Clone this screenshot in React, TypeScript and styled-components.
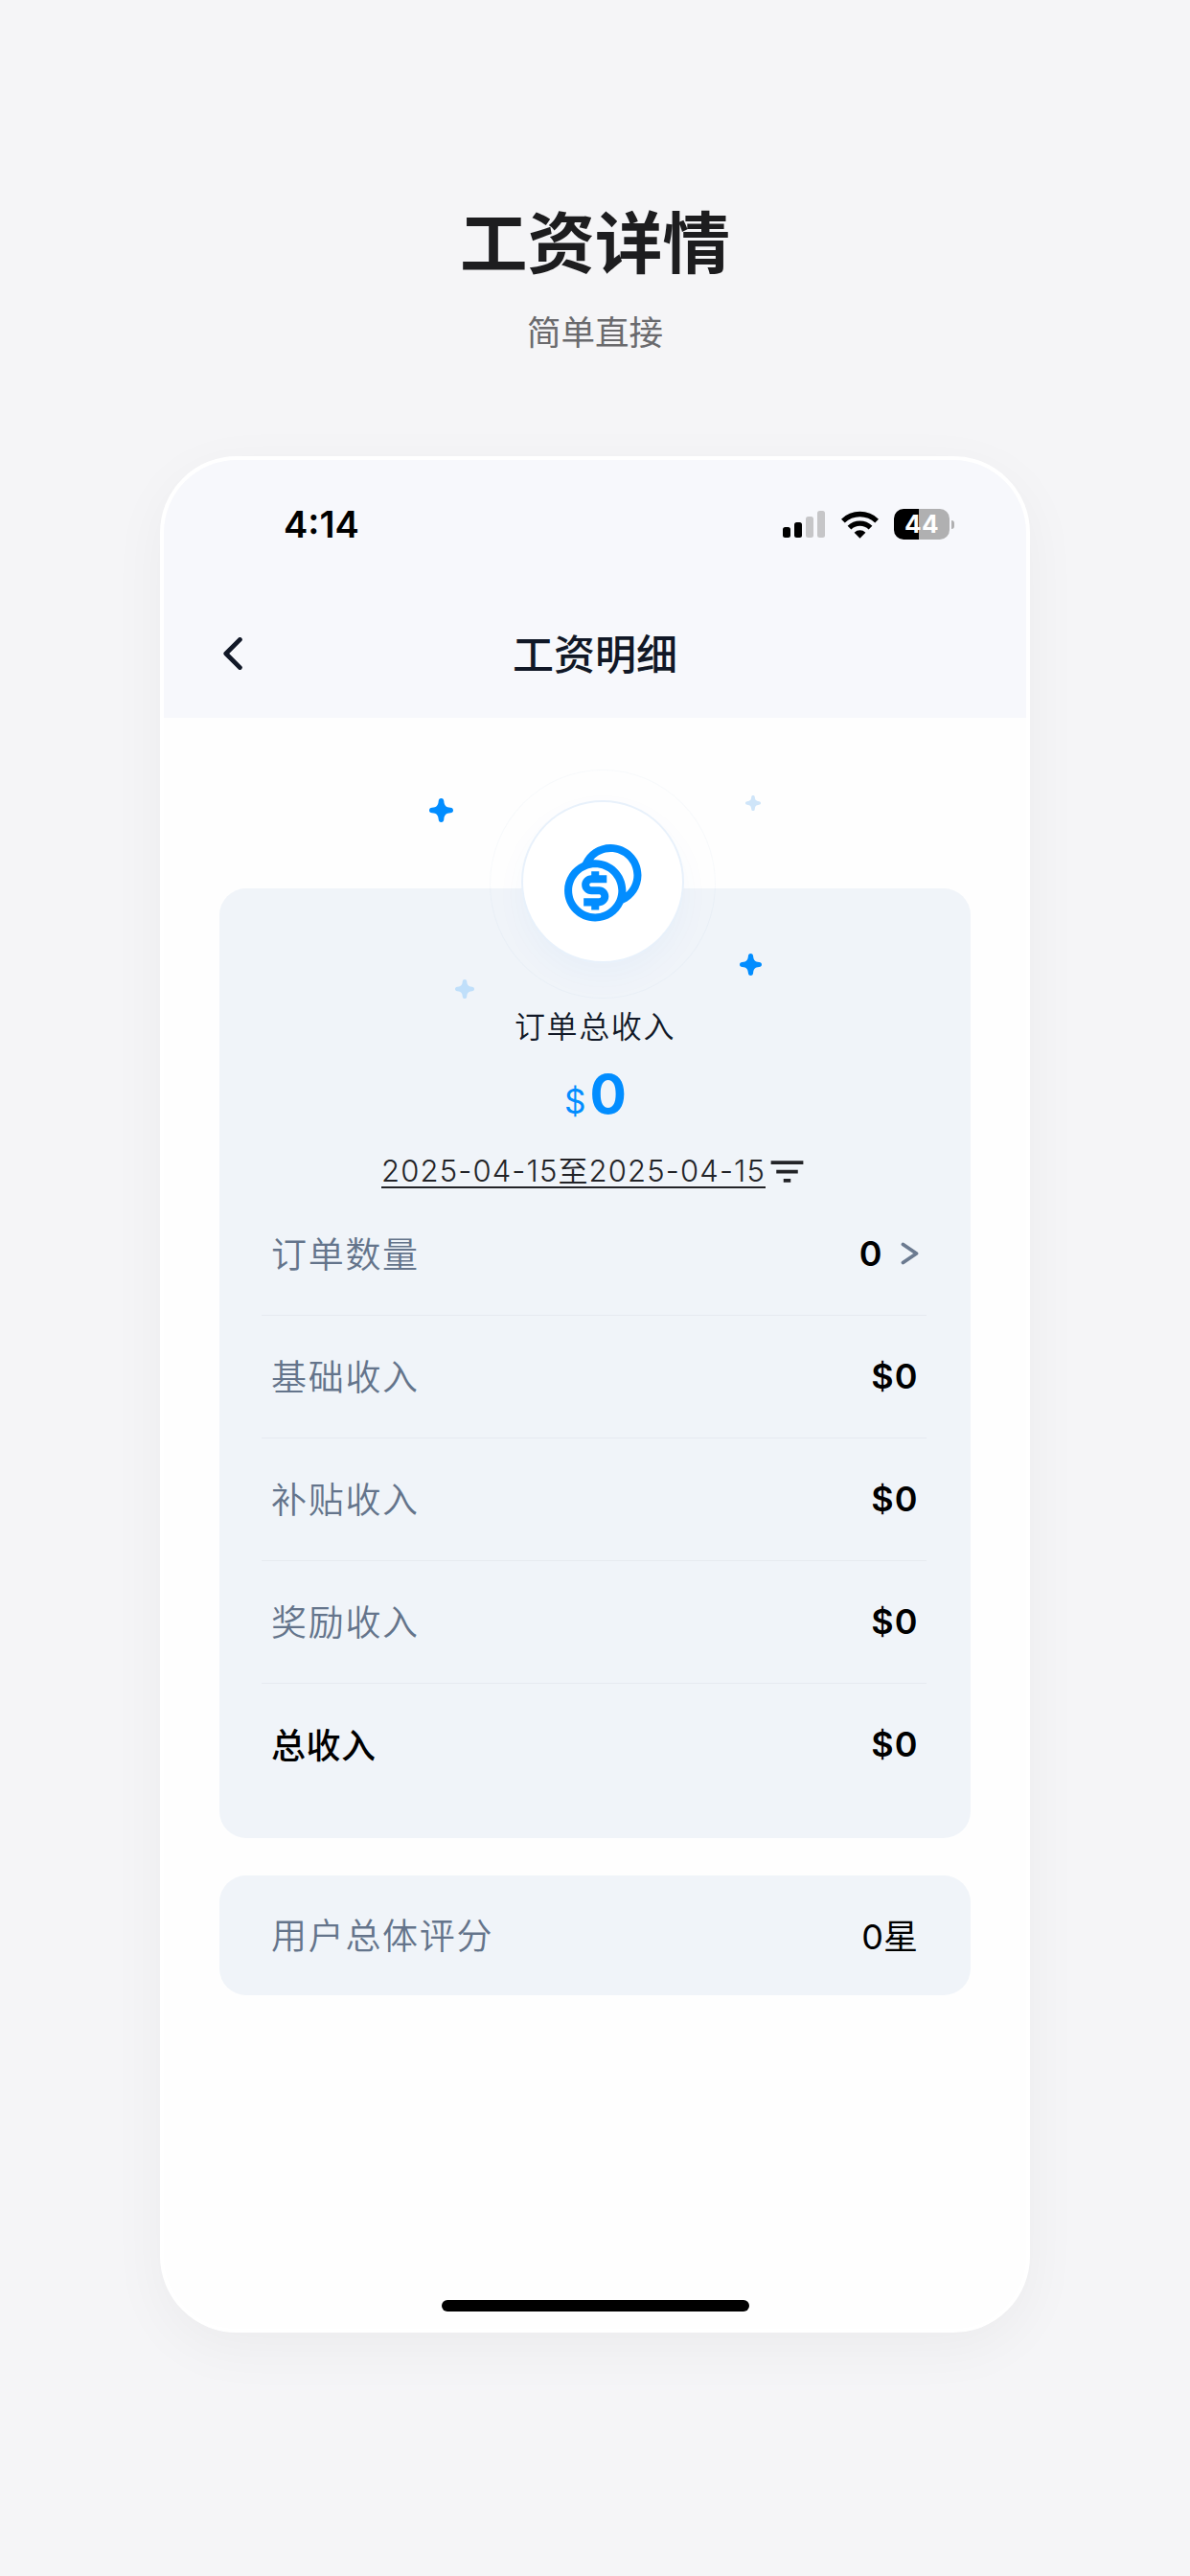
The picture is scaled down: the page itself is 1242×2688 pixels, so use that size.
import React from 'react';
import styled, { createGlobalStyle, ThemeProvider } from 'styled-components';
import { MdFilterList } from 'react-icons/md';
import { RiCoinsLine } from 'react-icons/ri';

const theme = {
  page: '#f5f5f7',
  header: '#f7f8fc',
  card: '#f0f4f9',
  primary: '#028dff',
  ink: '#111827',
  gray: '#64748b',
  line: '#e6eaf0',
};

interface IIncomeRow {
  label: string;
  value: string;
  link?: boolean;
  total?: boolean;
}

interface ISparkle {
  x: number;
  y: number;
  size: number;
  color: string;
}

const incomeRows: IIncomeRow[] = [
  { label: '订单数量', value: '0', link: true },
  { label: '基础收入', value: '$0' },
  { label: '补贴收入', value: '$0' },
  { label: '奖励收入', value: '$0' },
  { label: '总收入', value: '$0', total: true },
];

// centers, relative to the card's top left corner
const sparkles: ISparkle[] = [
  { x: 231.5, y: -81.5, size: 25, color: '#028dff' },
  { x: 556.5, y: -89.5, size: 16, color: '#cfe5f9' },
  { x: 554, y: 79, size: 23, color: '#028dff' },
  { x: 255.5, y: 105, size: 20, color: '#c0dffa' },
];

const SignalIcon = () => (
  <svg width="45" height="28" viewBox="0 0 45 28">
    <rect x="0" y="17" width="8" height="11" rx="2.5" fill="#000" />
    <rect x="12" y="12" width="8" height="16" rx="2.5" fill="#000" />
    <rect x="24" y="6" width="8" height="22" rx="2.5" fill="#c6c6c8" />
    <rect x="36" y="0" width="8" height="28" rx="2.5" fill="#c6c6c8" />
  </svg>
);

const WifiIcon = () => (
  <svg width="39" height="29" viewBox="0 0 39 29">
    <g fill="none" stroke="#000" strokeWidth="5.4">
      <path d="M1.9 10.6 A25.4 25.4 0 0 1 37.1 10.6" />
      <path d="M8.5 17.6 A15.7 15.7 0 0 1 30.5 17.6" />
    </g>
    <path d="M13.6 22.7 A8.6 8.6 0 0 1 25.4 22.7 L19.5 28.8 Z" fill="#000" />
  </svg>
);

const Sparkle = ({ item }: { item: ISparkle }) => (
  <SparkleBox $x={item.x} $y={item.y} $size={item.size}>
    <svg width="100%" height="100%" viewBox="0 0 24 24">
      <path
        fill={item.color}
        d="M12 0C13.7 0 14.5 1 14.7 2.8C15.2 7.4 16.6 8.8 21.2 9.3C23 9.5 24 10.3 24 12C24 13.7 23 14.5 21.2 14.7C16.6 15.2 15.2 16.6 14.7 21.2C14.5 23 13.7 24 12 24C10.3 24 9.5 23 9.3 21.2C8.8 16.6 7.4 15.2 2.8 14.7C1 14.5 0 13.7 0 12C0 10.3 1 9.5 2.8 9.3C7.4 8.8 8.8 7.4 9.3 2.8C9.5 1 10.3 0 12 0Z"
      />
    </svg>
  </SparkleBox>
);

const StatusBar = () => (
  <StatusWrapper>
    <Time>4:14</Time>
    <StatusIcons>
      <SignalIcon />
      <WifiIcon />
      <Battery>
        <BatteryBody>44</BatteryBody>
        <BatteryCap />
      </Battery>
    </StatusIcons>
  </StatusWrapper>
);

const IncomeRow = ({ row }: { row: IIncomeRow }) => (
  <Row>
    <Label $total={row.total}>{row.label}</Label>
    <ValueBox>
      <Value>{row.value}</Value>
      {row.link && (
        <svg width="19" height="24" viewBox="0 0 19 24">
          <path
            d="M2.5 2.5 L16.5 12 L2.5 21.5"
            fill="none"
            stroke="#6b7a90"
            strokeWidth="3.8"
            strokeLinecap="round"
            strokeLinejoin="round"
          />
        </svg>
      )}
    </ValueBox>
  </Row>
);

const App = () => {
  return (
    <ThemeProvider theme={theme}>
      <GlobalStyle />
      <Page>
        <PageTitle>工资详情</PageTitle>
        <PageSubtitle>简单直接</PageSubtitle>
        <Phone>
          <Header>
            <StatusBar />
            <NavBar>
              <BackButton>
                <svg width="20" height="34" viewBox="0 0 20 34">
                  <path
                    d="M17.4 2.4 L2.8 17 L17.4 31.6"
                    fill="none"
                    stroke="#111827"
                    strokeWidth="4.8"
                    strokeLinecap="round"
                    strokeLinejoin="round"
                  />
                </svg>
              </BackButton>
              <NavTitle>工资明细</NavTitle>
            </NavBar>
          </Header>
          <Body>
            <SummaryCard>
              <Halo>
                <Badge>
                  <RiCoinsLine size={96.5} />
                </Badge>
              </Halo>
              {sparkles.map((item) => (
                <Sparkle key={`${item.x}-${item.y}`} item={item} />
              ))}
              <SummaryLabel>订单总收入</SummaryLabel>
              <Amount>
                <Currency>$</Currency>0
              </Amount>
              <DateFilter>
                <DateRange>2025-04-15至2025-04-15</DateRange>
                <MdFilterList size={45} />
              </DateFilter>
              <Rows>
                {incomeRows.map((row) => (
                  <IncomeRow key={row.label} row={row} />
                ))}
              </Rows>
            </SummaryCard>
            <RatingCard>
              <Label>用户总体评分</Label>
              <Rating>0星</Rating>
            </RatingCard>
          </Body>
          <HomeIndicator />
        </Phone>
      </Page>
    </ThemeProvider>
  );
};

const GlobalStyle = createGlobalStyle`
  * {
    box-sizing: border-box;
  }

  body {
    margin: 0;
    background: #f5f5f7;
    font-family: Inter, 'Noto Sans CJK SC', sans-serif;
  }

  svg {
    display: block;
    flex-shrink: 0;
  }
`;

const Page = styled.div`
  display: flex;
  flex-direction: column;
  align-items: center;
  width: 1242px;
  height: 2688px;
  padding-top: 199px;
  overflow: hidden;
  background: ${(props) => props.theme.page};
`;

const PageTitle = styled.h1`
  margin: 0;
  font-family: 'Noto Sans CJK SC', sans-serif;
  font-size: 70.5px;
  font-weight: 700;
  line-height: 100px;
  color: #1d1d1f;
`;

const PageSubtitle = styled.div`
  margin-top: 21px;
  font-family: 'Noto Sans CJK SC', sans-serif;
  font-size: 35.5px;
  line-height: 50px;
  color: #6a6a6d;
`;

const Phone = styled.div`
  display: flex;
  flex-direction: column;
  width: 908px;
  height: 1958px;
  margin-top: 106px;
  border: 4px solid #fff;
  border-radius: 80px;
  overflow: hidden;
  background: #fefefe;
  box-shadow: 0 16px 60px rgba(20, 10, 20, 0.045);
`;

const Header = styled.div`
  height: 269px;
  background: ${(props) => props.theme.header};
`;

const StatusWrapper = styled.div`
  display: flex;
  justify-content: space-between;
  align-items: center;
  height: 134px;
  padding: 0 75px 0 125px;
`;

const Time = styled.div`
  font-size: 38px;
  font-weight: 600;
  color: #000;
`;

const StatusIcons = styled.div`
  display: flex;
  align-items: center;
  gap: 16px;
`;

const Battery = styled.div`
  display: flex;
  align-items: center;
  gap: 2px;
`;

const BatteryBody = styled.div`
  width: 58px;
  height: 32px;
  border-radius: 10px;
  background: linear-gradient(90deg, #000 44.5%, #b0b0b1 44.5%);
  font-size: 26px;
  font-weight: 650;
  line-height: 32px;
  letter-spacing: 0.4px;
  text-align: center;
  color: #fff;
`;

const BatteryCap = styled.div`
  width: 3px;
  height: 9px;
  border-radius: 0 4px 4px 0;
  background: #b0b0b1;
`;

const NavBar = styled.div`
  display: grid;
  grid-template-columns: 100px 1fr 100px;
  align-items: center;
  height: 135px;
`;

const BackButton = styled.div`
  padding-left: 62px;
`;

const NavTitle = styled.div`
  padding-bottom: 3px;
  font-family: 'Noto Sans CJK SC', sans-serif;
  font-size: 43px;
  font-weight: 500;
  line-height: 62px;
  text-align: center;
  color: ${(props) => props.theme.ink};
`;

const Body = styled.div`
  display: flex;
  flex-direction: column;
  flex: 1;
  gap: 39px;
  padding: 178px 58px 0;
`;

const SummaryCard = styled.div`
  position: relative;
  display: flex;
  flex-direction: column;
  align-items: center;
  height: 991px;
  padding-top: 118px;
  border-radius: 28px;
  background: ${(props) => props.theme.card};
`;

const Halo = styled.div`
  position: absolute;
  top: -124px;
  left: 282px;
  display: flex;
  justify-content: center;
  padding-top: 31px;
  width: 236px;
  height: 239px;
  border: 1px solid rgba(120, 150, 190, 0.05);
  border-radius: 50%;
`;

const Badge = styled.div`
  display: flex;
  justify-content: center;
  align-items: center;
  width: 170px;
  height: 170px;
  padding-top: 2px;
  border: 2px solid #e8f1fb;
  border-radius: 50%;
  background: #fff;
  box-shadow: 0 14px 34px rgba(2, 100, 220, 0.035);
  color: ${(props) => props.theme.primary};
`;

const SparkleBox = styled.div<{ $x: number; $y: number; $size: number }>`
  position: absolute;
  top: ${(props) => props.$y - props.$size / 2}px;
  left: ${(props) => props.$x - props.$size / 2}px;
  width: ${(props) => props.$size}px;
  height: ${(props) => props.$size}px;
`;

const SummaryLabel = styled.div`
  font-family: 'Noto Sans CJK SC', sans-serif;
  font-size: 32px;
  font-weight: 350;
  line-height: 48px;
  letter-spacing: 1.6px;
  color: ${(props) => props.theme.ink};
`;

const Amount = styled.div`
  display: flex;
  align-items: baseline;
  gap: 5px;
  height: 70px;
  margin-top: 14px;
  font-size: 57px;
  font-weight: 650;
  line-height: 70px;
  letter-spacing: -1px;
  color: ${(props) => props.theme.primary};
`;

const Currency = styled.span`
  font-size: 35px;
  font-weight: 400;
`;

const DateFilter = styled.div`
  display: flex;
  align-items: center;
  height: 45px;
  margin-top: 23px;
  color: #222327;
`;

const DateRange = styled.div`
  border-bottom: 2px solid #222327;
  font-size: 31px;
  font-weight: 360;
  line-height: 33px;
  letter-spacing: 1.15px;
`;

const Rows = styled.div`
  align-self: stretch;
  padding: 0 46px 0 44px;
`;

const Row = styled.div`
  display: flex;
  justify-content: space-between;
  align-items: center;
  height: 128px;
  padding: 0 8.5px 0 10px;
  border-bottom: 1px solid ${(props) => props.theme.line};
  &:last-child {
    height: 126px;
    border-bottom: none;
  }
`;

const Label = styled.div<{ $total?: boolean }>`
  padding-bottom: 3px;
  font-family: 'Noto Sans CJK SC', sans-serif;
  font-size: ${(props) => (props.$total ? 36 : 37)}px;
  font-weight: ${(props) => (props.$total ? 500 : 350)};
  letter-spacing: ${(props) => (props.$total ? 0.5 : 1.7)}px;
  color: ${(props) => (props.$total ? '#000' : props.theme.gray)};
`;

const ValueBox = styled.div`
  display: flex;
  align-items: center;
  gap: 18px;
  padding-bottom: 1px;
`;

const Value = styled.div`
  font-size: 36px;
  font-weight: 600;
  letter-spacing: 1px;
  color: #000;
`;

const RatingCard = styled.div`
  display: flex;
  justify-content: space-between;
  align-items: center;
  height: 125px;
  padding: 0 55px 0 54px;
  border-radius: 28px;
  background: ${(props) => props.theme.card};
`;

const Rating = styled.div`
  padding-bottom: 3px;
  font-size: 36px;
  font-weight: 400;
  color: #000;
`;

const HomeIndicator = styled.div`
  align-self: center;
  width: 321px;
  height: 12px;
  margin-bottom: 18px;
  border-radius: 6px;
  background: #000;
`;

export default App;
